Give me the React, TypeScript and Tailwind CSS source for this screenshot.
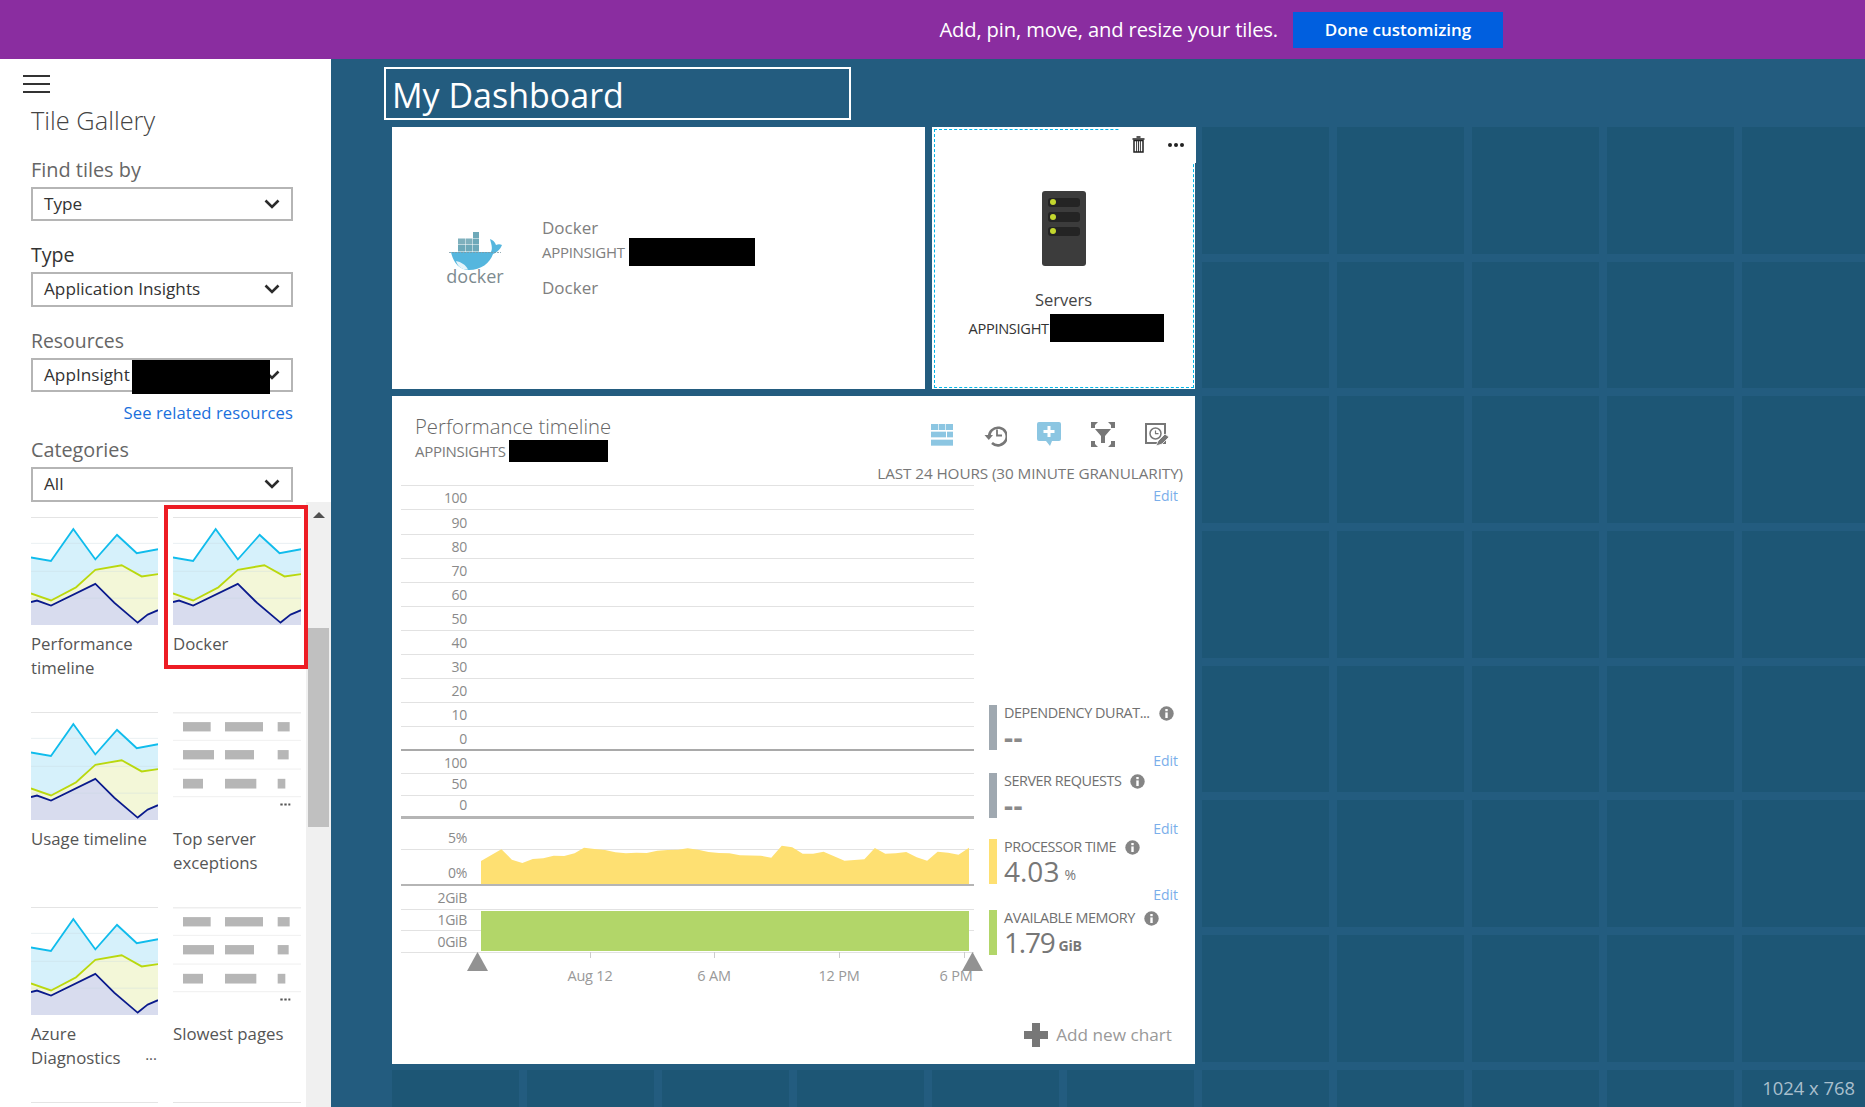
import React from 'react';
import clsx from 'clsx';

const THUMB_CYAN = '0,148 60,157 127,75 193,153 258,90 317,137 381,127';
const THUMB_LIME = '0,241 60,259 135,225 193,180 272,168 332,197 381,191';
const THUMB_NAVY = '0,263 18,259 60,272 193,216 250,265 320,316 350,295 381,284';
const CPU_AREA =
  '174,541 213,506 233,537 253,547 273,535 293,533 313,525 333,526 353,518 371,501 391,505 411,508 431,515 451,518 471,516 491,517 511,510 531,508 551,507 569,503 589,507 609,514 629,517 649,518 669,524 709,525 729,531 749,495 769,500 789,519 809,519 829,513 849,527 869,540 907,536 927,502 947,519 967,518 987,514 1007,530 1027,540 1047,513 1067,516 1087,522 1107,501 1107,610 174,610';

const Chevron = () => (
  <svg width="16" height="10" viewBox="0 0 16 10" className="shrink-0">
    <path d="M1.5 1.5 8 8l6.5-6.5" fill="none" stroke="#2b2b2b" strokeWidth="2.6" />
  </svg>
);

const Select = ({ value, className, children }: { value: string; className: string; children?: React.ReactNode }) => (
  <div className={clsx('relative flex items-center justify-between border-2 border-[#b5b5b5] bg-white pl-[11px] pr-[11px] text-[17.2px] text-[#333]', className)}>
    <span className="w-[100%] whitespace-nowrap">{value}</span>
    <Chevron />
    {children}
  </div>
);

const ThumbChart = () => (
  <svg viewBox="0 44 381 278" preserveAspectRatio="none" className="block h-[108px] w-full">
    <polygon points={`${THUMB_CYAN} 381,322 0,322`} fill="#d6f1fb" />
    <polygon points={`${THUMB_LIME} 381,322 0,322`} fill="#f3f7d8" />
    <polygon points={`${THUMB_NAVY} 381,322 0,322`} fill="#d8dcee" />
    <path d="M0 45H381" stroke="#e4e4e4" strokeWidth="3" />
    <path d="M0 112H381M0 184H381M0 253H381" stroke="#c9d8e0" strokeWidth="2" opacity="0.5" />
    <polyline points={THUMB_CYAN} fill="none" stroke="#10bcec" strokeWidth="5" />
    <polyline points={THUMB_LIME} fill="none" stroke="#b9d80e" strokeWidth="5" />
    <polyline points={THUMB_NAVY} fill="none" stroke="#0a1a8c" strokeWidth="5" />
  </svg>
);

const ThumbTable = () => (
  <svg viewBox="0 0 384 278" preserveAspectRatio="none" className="block h-[108px] w-full">
    <path d="M0 2H384" stroke="#eeeeee" strokeWidth="4" />
    <path d="M0 73H384M0 147H384M0 218H384" stroke="#eeeeee" strokeWidth="2.5" />
    <g fill="#b6b6b6">
      <rect x="30" y="26" width="83" height="24" />
      <rect x="156" y="26" width="114" height="24" />
      <rect x="314" y="26" width="36" height="24" />
      <rect x="30" y="98" width="93" height="24" />
      <rect x="156" y="98" width="87" height="24" />
      <rect x="314" y="98" width="33" height="24" />
      <rect x="30" y="172" width="60" height="25" />
      <rect x="156" y="172" width="94" height="25" />
      <rect x="314" y="172" width="23" height="25" />
    </g>
    <path d="M322 238h7M334 238h7M346 238h6" stroke="#555" strokeWidth="5" />
  </svg>
);

const GalleryItem = ({ kind, lines, more, selected }: { kind: 'chart' | 'table'; lines: string[]; more?: boolean; selected?: boolean }) => (
  <div className="relative">
    {selected && <div className="absolute left-[-9px] top-[-12px] z-10 h-[164px] w-[144px] border-[4.5px] border-[#ed1c24]" />}
    {kind === 'chart' ? <ThumbChart /> : <ThumbTable />}
    <div className="mt-[7px] text-[16.8px] leading-[24px] text-[#555]">
      {lines.map((line) => (
        <div key={line}>{line}</div>
      ))}
    </div>
    {more && <div className="absolute bottom-[40px] right-[1px] text-[15px] leading-none text-[#555]">...</div>}
  </div>
);

const Sidebar = () => (
  <aside className="flex w-[331px] shrink-0 flex-col bg-white">
    <div className="ml-[23px] mt-[16px] flex w-[27px] flex-col gap-[6.5px]">
      <div className="h-[1.5px] bg-[#333]" />
      <div className="h-[1.5px] bg-[#333]" />
      <div className="h-[1.5px] bg-[#333]" />
    </div>
    <div className="ml-[31px] w-[262px]">
      <h2 className="mt-[11px] text-[25.4px] font-light leading-[32px] text-[#444]">Tile Gallery</h2>
      <div className="mt-[22px] text-[19.9px] leading-[24px] text-[#666]">Find tiles by</div>
      <Select value="Type" className="mt-[5px] h-[34px]" />
      <div className="mt-[22px] text-[19.6px] leading-[24px] text-[#333]">Type</div>
      <Select value="Application Insights" className="mt-[5px] h-[35px]" />
      <div className="mt-[22px] text-[19.4px] leading-[24px] text-[#666]">Resources</div>
      <Select value="AppInsight" className="mt-[5px] h-[34px]">
        <div className="absolute left-[99px] top-[0px] h-[34px] w-[138px] bg-black" />
      </Select>
      <div className="mt-[11px] text-right text-[16.6px] leading-[20px] tracking-[0.1px] text-[#1a6fdc]">See related resources</div>
      <div className="mt-[15px] text-[19.8px] leading-[24px] text-[#666]">Categories</div>
      <Select value="All" className="mt-[5px] h-[35px]" />
    </div>
    <div className="flex min-h-0 flex-1 overflow-hidden">
      <div className="ml-[31px] mt-[15px] grid w-[270px] grid-cols-[127px_128px] auto-rows-[195px] gap-x-[15px]">
        <GalleryItem kind="chart" lines={['Performance', 'timeline']} />
        <GalleryItem kind="chart" lines={['Docker']} selected />
        <GalleryItem kind="chart" lines={['Usage timeline']} />
        <GalleryItem kind="table" lines={['Top server', 'exceptions']} />
        <GalleryItem kind="chart" lines={['Azure', 'Diagnostics']} more />
        <GalleryItem kind="table" lines={['Slowest pages']} />
        <div className="h-[1px] bg-[#e4e4e4]" />
        <div className="h-[1px] bg-[#e4e4e4]" />
      </div>
      <div className="ml-[5px] flex w-[25px] shrink-0 flex-col items-center bg-[#f0f0f0]">
        <svg width="12" height="6" viewBox="0 0 12 6" className="mt-[10px]">
          <polygon points="6,0 12,6 0,6" fill="#505050" />
        </svg>
        <div className="mt-[110px] h-[199px] w-[21px] bg-[#c0c0c0]" />
      </div>
    </div>
  </aside>
);

const InfoIcon = () => (
  <svg width="15" height="15" viewBox="0 0 15 15" className="shrink-0">
    <circle cx="7.5" cy="7.5" r="7.2" fill="#858585" />
    <rect x="6.3" y="6.4" width="2.4" height="5.6" fill="#fff" />
    <rect x="6.3" y="3" width="2.4" height="2.2" fill="#fff" />
  </svg>
);

const LegendEdit = ({ className }: { className?: string }) => (
  <div className={clsx('h-[20px] text-right text-[14px] leading-[20px] text-[#7aaeea]', className)}>Edit</div>
);

const LegendItem = ({ title, bar, children }: { title: string; bar: string; children: React.ReactNode }) => (
  <div className="flex h-[45px] items-start">
    <div className={clsx('h-full w-[8px] shrink-0', bar)} />
    <div className="ml-[7px] min-w-0 flex-1">
      <div className="flex h-[16px] items-center gap-[9px] text-[14.4px] leading-[16px] tracking-[-0.45px] text-[#707070]">
        <span className="whitespace-nowrap">{title}</span>
        <InfoIcon />
      </div>
      {children}
    </div>
  </div>
);

const AxisRow = ({ label, className }: { label: string; className: string }) => (
  <div className={clsx('flex items-end border-b border-[#e2e2e2] pb-[2px] text-[14px] leading-[18px] text-[#8a8a8a]', className)}>
    <span className="w-[66px] text-right tracking-[-0.3px]">{label}</span>
  </div>
);

const TimeLabel = ({ children, className }: { children: string; className: string }) => (
  <div className={clsx('absolute top-[480px] -translate-x-1/2 whitespace-nowrap text-[14.5px] leading-[20px] tracking-[-0.2px] text-[#999]', className)}>{children}</div>
);

const NoValue = () => <div className="mt-[4px] text-[28px] font-bold leading-[24px] tracking-[0.5px] text-[#8a8a8a]">--</div>;

const Plot = () => (
  <div className="relative ml-[9px] w-[573px] shrink-0 border-t border-[#e2e2e2]">
    {['100', '90', '80', '70', '60', '50', '40', '30', '20', '10'].map((n) => (
      <AxisRow key={n} label={n} className="h-[24.1px]" />
    ))}
    <AxisRow label="0" className="h-[24.1px] !border-b-2 !border-[#a9a9a9] !pb-[1px]" />
    <AxisRow label="100" className="h-[22.4px] !pb-[1px]" />
    <AxisRow label="50" className="h-[22.4px]" />
    <AxisRow label="0" className="h-[22.4px] !border-b-[3px] !border-[#b5b5b5]" />
    <AxisRow label="5%" className="h-[31px]" />
    <AxisRow label="0%" className="h-[36px] !border-b-2 !border-[#b5b5b5]" />
    <AxisRow label="2GiB" className="h-[24px]" />
    <AxisRow label="1GiB" className="h-[21px] !pb-[1px]" />
    <AxisRow label="0GiB" className="h-[22px] !pb-[1px]" />

    <svg viewBox="174 490 933 120" preserveAspectRatio="none" className="absolute left-[80px] top-[358px] h-[40px] w-[488px]">
      <polygon points={CPU_AREA} fill="#fee072" />
    </svg>
    <div className="absolute left-[80px] top-[425px] h-[40px] w-[488px] bg-[#b2d669]" />

    <div className="absolute left-[189px] top-[466px] h-[6px] w-px bg-[#ccc]" />
    <div className="absolute left-[313px] top-[466px] h-[6px] w-px bg-[#ccc]" />
    <div className="absolute left-[438px] top-[466px] h-[6px] w-px bg-[#ccc]" />
    <div className="absolute left-[563px] top-[466px] h-[6px] w-px bg-[#ccc]" />
    <TimeLabel className="left-[189px]">Aug 12</TimeLabel>
    <TimeLabel className="left-[313px]">6 AM</TimeLabel>
    <TimeLabel className="left-[438px]">12 PM</TimeLabel>
    <TimeLabel className="left-[555px]">6 PM</TimeLabel>

    <svg width="21" height="19" viewBox="0 0 21 19" className="absolute left-[66px] top-[466px]">
      <polygon points="10.5,0 21,19 0,19" fill="#929292" />
    </svg>
    <svg width="21" height="19" viewBox="0 0 21 19" className="absolute left-[561px] top-[466px]">
      <polygon points="10.5,0 21,19 0,19" fill="#929292" />
    </svg>
  </div>
);

const GridIcon = () => (
  <svg width="22" height="22" viewBox="0 0 66 66" fill="#8cc6e2">
    <rect x="0" y="0" width="21" height="18" />
    <rect x="23" y="0" width="20" height="18" />
    <rect x="45" y="0" width="21" height="18" />
    <rect x="0" y="23" width="45" height="17" />
    <rect x="48" y="23" width="18" height="17" />
    <rect x="0" y="47" width="66" height="18" />
  </svg>
);

const HistoryIcon = () => (
  <svg width="24" height="24" viewBox="0 0 24 24" fill="none">
    <path d="M6.2 14.5A8.8 8.8 0 1 1 9 20" stroke="#777" strokeWidth="2.6" />
    <polygon points="1.5,12 10,12 5.8,17" fill="#777" />
    <path d="M14 6.5v6h5" stroke="#777" strokeWidth="1.8" />
  </svg>
);

const CommentIcon = () => (
  <svg width="24" height="25" viewBox="0 0 24 25">
    <path d="M2 0h20a2 2 0 0 1 2 2v15a2 2 0 0 1-2 2h-7l-2 5-4-5H2a2 2 0 0 1-2-2V2a2 2 0 0 1 2-2Z" fill="#8cc6e2" />
    <path d="M12 4v11M6.5 9.5h11" stroke="#fff" strokeWidth="3" />
  </svg>
);

const FilterIcon = () => (
  <svg width="24" height="25" viewBox="0 0 24 25" fill="#777">
    <polygon points="0,0 7,0 4,3 4,6 0,6" />
    <polygon points="24,0 17,0 20,3 20,6 24,6" />
    <polygon points="0,25 7,25 4,22 4,19 0,19" />
    <polygon points="24,25 17,25 20,22 20,19 24,19" />
    <polygon points="4,7 20,7 14,14 14,21 10,21 10,14" />
  </svg>
);

const ClockEditIcon = () => (
  <svg width="24" height="24" viewBox="0 0 24 24" fill="none">
    <rect x="1" y="1" width="19" height="19" stroke="#777" strokeWidth="2" />
    <circle cx="10.5" cy="10.5" r="5.5" stroke="#777" strokeWidth="1.5" />
    <path d="M10.5 7.5v3.2h3" stroke="#777" strokeWidth="1.2" />
    <polygon points="11,23 13,18 20,11 24,14 17,21" fill="#777" stroke="#fff" strokeWidth="0.8" />
  </svg>
);

const DockerLogo = () => (
  <svg width="60" height="56" viewBox="-2 0 60 56" className="mt-[4px] shrink-0">
    <g fill="#6ea9b9">
      <rect x="25" y="0" width="6" height="6" />
      <rect x="25" y="6.5" width="6" height="6" />
      <rect x="17.5" y="6.5" width="7" height="6" fill="#7fb0bd" />
      <rect x="10" y="6.5" width="7" height="6" fill="#7fb0bd" />
      <rect x="10" y="13" width="7" height="6.5" />
      <rect x="17.5" y="13" width="7" height="6.5" />
      <rect x="25" y="13" width="6" height="6.5" />
    </g>
    <path d="M3 20H43C45 16 43 11 42 7 45 8 47 10 48 13 50 12 52 12 54 13 52 18 48 21 45 22 42 31 33 38 21 38 11 38 5 30 3 20Z" fill="#55b6de" />
    <path d="M8 29C13 30 18 33 20 37.5 14 38 10 35 8 29Z" fill="#e6f4fa" />
    <path d="M1 20.5h52" stroke="#7b98a3" strokeWidth="0.8" strokeDasharray="2 1" />
    <text x="27" y="51" textAnchor="middle" fontSize="18" fill="#7d8b90">docker</text>
  </svg>
);

const ServerIcon = () => (
  <div className="flex h-[75px] w-[44px] flex-col gap-[5px] rounded-[3px] bg-[#3c3c3c] px-[6px] pt-[7px]">
    {[0, 1, 2].map((i) => (
      <div key={i} className="flex h-[9.5px] items-center rounded-[3px] bg-[#242424] pl-[2px]">
        <div className="h-[6px] w-[6px] rounded-full bg-[#c3d72e]" />
      </div>
    ))}
  </div>
);

const TrashIcon = () => (
  <svg width="13" height="17" viewBox="0 0 13 17" fill="none">
    <path d="M4.5 1h4M0.5 3h12" stroke="#222" strokeWidth="1.6" />
    <path d="M2 4.5h9V16H2Z" stroke="#222" strokeWidth="1.5" />
    <path d="M4.6 5v11M6.5 5v11M8.4 5v11" stroke="#222" strokeWidth="0.9" />
  </svg>
);

const DockerTile = () => (
  <div className="col-span-4 col-start-1 row-span-2 row-start-1 -mb-px -mr-px flex items-center gap-[36px] bg-white pl-[54px]">
    <DockerLogo />
    <div className="text-[#808080]">
      <div className="text-[17px] leading-[24px]">Docker</div>
      <div className="mt-[3px] flex items-center text-[15px] leading-[18px] tracking-[-0.3px]">
        <span className="w-[87px] whitespace-nowrap">APPINSIGHT</span>
        <div className="-my-[5px] h-[28px] w-[126px] bg-black" />
      </div>
      <div className="mt-[15px] text-[17px] leading-[24px]">Docker</div>
    </div>
  </div>
);

const ServersTile = () => (
  <div className="col-span-2 col-start-5 row-span-2 row-start-1 -mb-px -mr-px bg-white p-[1.5px]">
    <div className="relative flex h-full flex-col items-center border border-dashed border-[#00b4e8]">
      <div className="absolute right-[-3px] top-[-3px] flex h-[36px] w-[77px] items-center bg-white pl-[13px]">
        <TrashIcon />
        <div className="ml-[23px] flex gap-[2px]">
          <div className="h-[4px] w-[4px] rounded-full bg-[#222]" />
          <div className="h-[4px] w-[4px] rounded-full bg-[#222]" />
          <div className="h-[4px] w-[4px] rounded-full bg-[#222]" />
        </div>
      </div>
      <div className="mt-[61px]">
        <ServerIcon />
      </div>
      <div className="mt-[22px] text-[16.5px] leading-[24px] text-[#444]">Servers</div>
      <div className="ml-[34px] mt-[7px] flex items-center self-start text-[14.6px] leading-[18px] tracking-[-0.3px] text-[#333]">
        <span className="w-[81px] whitespace-nowrap">APPINSIGHT</span>
        <div className="-my-[5px] h-[28px] w-[114px] bg-black" />
      </div>
    </div>
  </div>
);

const TimelineTile = () => (
  <div className="col-span-6 col-start-1 row-span-5 row-start-3 -mb-[2px] -mr-px flex flex-col bg-white">
    <div className="flex h-[64px] items-start justify-between pl-[23px] pr-[26px]">
      <div className="pt-[17px] text-[#7a7a7a]">
        <div className="text-[20.3px] font-light leading-[26px] text-[#666]">Performance timeline</div>
        <div className="mt-[3px] flex items-center text-[15px] leading-[18px] tracking-[-0.3px]">
          <span className="w-[94px] whitespace-nowrap">APPINSIGHTS</span>
          <div className="-my-[2px] h-[22px] w-[99px] bg-black" />
        </div>
      </div>
      <div className="mt-[26px] flex items-center gap-[30px]">
        <GridIcon />
        <HistoryIcon />
        <CommentIcon />
        <FilterIcon />
        <ClockEditIcon />
      </div>
    </div>
    <div className="mt-[3px] h-[22px] pr-[12px] text-right text-[15.3px] leading-[20px] tracking-[-0.1px] text-[#777]">LAST 24 HOURS (30 MINUTE GRANULARITY)</div>
    <div className="flex items-start">
      <Plot />
      <div className="ml-[15px] mt-px w-[189px]">
        <LegendEdit />
        <div className="mt-[199px]">
          <LegendItem title="DEPENDENCY DURAT..." bar="bg-[#9fa8b0]">
            <NoValue />
          </LegendItem>
        </div>
        <LegendEdit className="mt-[1px] mb-[2px]" />
        <LegendItem title="SERVER REQUESTS" bar="bg-[#9fa8b0]">
          <NoValue />
        </LegendItem>
        <LegendEdit className="mt-[1px]" />
        <LegendItem title="PROCESSOR TIME" bar="bg-[#fee072]">
          <div className="mt-[1px] flex items-baseline leading-[30px] text-[#777]">
            <span className="text-[28px] font-medium">4.03</span>
            <span className="relative -top-[2px] ml-[5px] text-[14px]">%</span>
          </div>
        </LegendItem>
        <LegendEdit className="mt-[1px] mb-[5px]" />
        <LegendItem title="AVAILABLE MEMORY" bar="bg-[#b2d669]">
          <div className="mt-[1px] flex items-baseline leading-[30px] text-[#777]">
            <span className="text-[28px] font-medium tracking-[-1.2px]">1.79</span>
            <span className="relative -top-[2px] ml-[4px] text-[14px] font-bold tracking-[-0.3px]">GiB</span>
          </div>
        </LegendItem>
      </div>
    </div>
    <div className="mb-[17px] mt-auto flex h-[24px] items-center justify-end gap-[8px] pr-[23px] text-[17.2px] text-[#999]">
      <svg width="24" height="24" viewBox="0 0 24 24">
        <path d="M12 0v24M0 12h24" stroke="#777" strokeWidth="8" />
      </svg>
      <span>Add new chart</span>
    </div>
  </div>
);

export default function App() {
  return (
    <div className="flex h-[1107px] w-[1865px] flex-col overflow-hidden bg-[#235c7f] font-['Open_Sans','Noto_Sans',sans-serif]">
      <header className="flex h-[59px] shrink-0 items-center justify-end bg-[#8a2da0] pr-[362px] text-white">
        <span className="text-[20.2px] tracking-[-0.15px]">Add, pin, move, and resize your tiles.</span>
        <button className="ml-[15px] h-[36px] w-[210px] bg-[#005fdf] text-[17px] font-semibold">Done customizing</button>
      </header>
      <div className="flex min-h-0 flex-1">
        <Sidebar />
        <main className="relative min-w-0 flex-1 overflow-hidden pl-[61px]">
          <div className="ml-[-8px] mt-[8px] flex h-[53px] w-[467px] items-center border-2 border-white pl-[6px] pt-[2px] text-[34px] leading-none text-white">My Dashboard</div>
          <div className="mt-[7px] grid grid-cols-[repeat(12,127px)] auto-rows-[126.7px] gap-[8px]">
            <DockerTile />
            <ServersTile />
            <TimelineTile />
            {Array.from({ length: 54 }, (_, i) => (
              <div key={i} className="bg-[#1d5675]" />
            ))}
          </div>
          <div className="absolute bottom-[7px] right-[10px] text-[18.4px] leading-[24px] text-[#a9bfcd]">1024 x 768</div>
        </main>
      </div>
    </div>
  );
}
